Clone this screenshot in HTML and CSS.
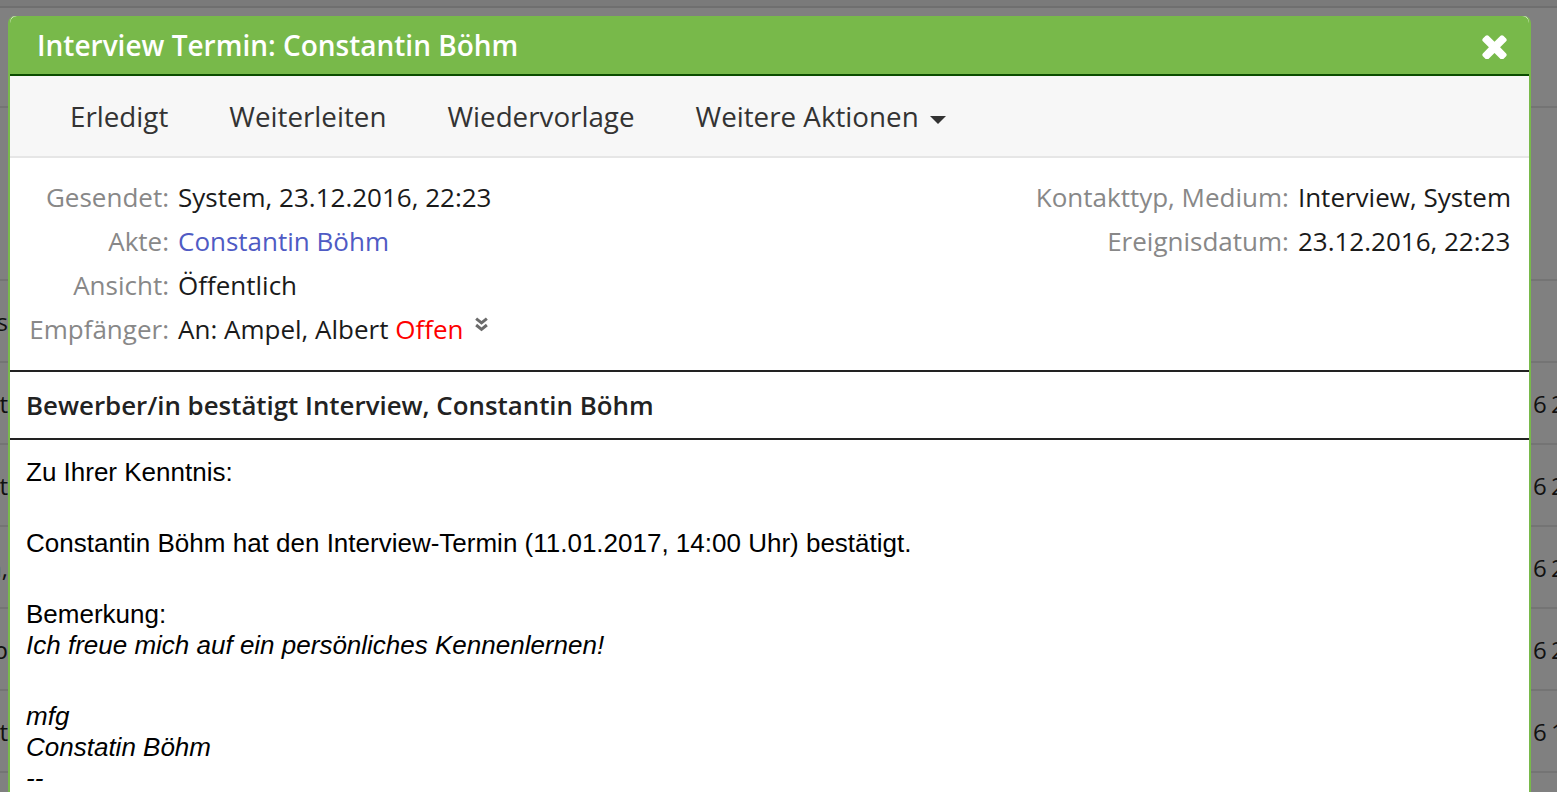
FILE: index.html
```html
<!doctype html>
<html>
<head>
<meta charset="utf-8">
<title>Interview Termin: Constantin Böhm</title>
<link rel="stylesheet" href="styles.css">
</head>
<body>
<div class="page">
	<div class="topband"></div>
	<div class="row r1"><div class="lcell"></div><div class="rcell"></div></div>
	<div class="row r2"><div class="lcell"></div><div class="rcell"></div></div>
	<div class="row"><div class="lcell">Bewerbungs</div><div class="rcell"></div></div>
	<div class="row"><div class="lcell">bestätigt</div><div class="rcell">6 2</div></div>
	<div class="row"><div class="lcell">bestätigt</div><div class="rcell">6 2</div></div>
	<div class="row"><div class="lcell">Böhm,</div><div class="rcell">6 2</div></div>
	<div class="row"><div class="lcell">Termp</div><div class="rcell">6 2</div></div>
	<div class="row"><div class="lcell">bestätigt</div><div class="rcell">6 1</div></div>
	<div class="row"><div class="lcell"></div><div class="rcell"></div></div>
</div>

<div class="modal">
	<div class="modal-head">
		<span class="modal-title">Interview Termin: Constantin Böhm</span>
		<span class="modal-close">
			<svg viewBox="110 310 1188 1216" width="25" height="25"><path fill="#fff" d="M1298 1322q0 40-28 68l-136 136q-28 28-68 28t-68-28l-294-294-294 294q-28 28-68 28t-68-28l-136-136q-28-28-28-68t28-68l294-294-294-294q-28-28-28-68t28-68l136-136q28-28 68-28t68 28l294 294 294-294q28-28 68-28t68 28l136 136q28 28 28 68t-28 68l-294 294 294 294q28 28 28 68z"/></svg>
		</span>
	</div>
	<ul class="toolbar">
		<li>Erledigt</li>
		<li>Weiterleiten</li>
		<li>Wiedervorlage</li>
		<li>Weitere Aktionen <span class="caret"></span></li>
	</ul>
	<div class="meta">
		<dl class="meta-left">
			<dt>Gesendet:</dt><dd>System, 23.12.2016, 22:23</dd>
			<dt>Akte:</dt><dd><a href="#">Constantin Böhm</a></dd>
			<dt>Ansicht:</dt><dd>Öffentlich</dd>
			<dt>Empfänger:</dt><dd>An: Ampel, Albert <span class="open">Offen</span>
				<svg class="more" viewBox="0 0 14 14" width="15" height="15"><path d="M2 1.5l5 4 5-4M2 7.5l5 4 5-4" fill="none" stroke="#6b6b6b" stroke-width="2.8"/></svg>
			</dd>
		</dl>
		<dl class="meta-right">
			<dt>Kontakttyp, Medium:</dt><dd>Interview, System</dd>
			<dt>Ereignisdatum:</dt><dd>23.12.2016, 22:23</dd>
		</dl>
	</div>
	<div class="subject">Bewerber/in bestätigt Interview, Constantin Böhm</div>
	<div class="message">
		<p>Zu Ihrer Kenntnis:</p>
		<p>Constantin Böhm hat den Interview-Termin (11.01.2017, 14:00 Uhr) bestätigt.</p>
		<p>Bemerkung:<br><i>Ich freue mich auf ein persönliches Kennenlernen!</i></p>
		<p><i>mfg<br>Constatin Böhm<br>--</i></p>
	</div>
</div>
</body>
</html>
```

FILE: styles.css
```css
* {margin:0; padding:0; list-style:none; box-sizing:border-box;}
html, body {height:100%; overflow:hidden;}
body {background:#808080; font-family:"Open Sans", sans-serif; color:#1a1a1a;}

.page {height:100%;}
.topband {height:8px; background:#7a7a7a; border-bottom:2px solid #6f6f6f;}
.row {display:flex; justify-content:space-between; align-items:center; height:82px; border-bottom:2px solid #747474; font-size:24px; color:#111;}
.row.r1 {height:100px;}
.row.r2 {height:173px;}
.lcell {width:8px; overflow:hidden; display:flex; justify-content:flex-end; white-space:nowrap;}
.rcell {width:26px; white-space:nowrap; word-spacing:-2px; padding-left:2px;}

.modal {position:absolute; left:8px; top:16px; width:1523px; height:800px; background:#fff; border:2px solid #78b94a; border-top:0; border-radius:7px 7px 0 0;}
.modal-head {height:60px; background:#78b94a; border-bottom:2px solid #0b4d00; border-radius:7px 7px 0 0; display:flex; align-items:center; justify-content:space-between; padding:0 22px 0 27px;}
.modal-title {color:#fff; font-size:28px; font-weight:600;}
.modal-close {display:flex; padding-top:2px;}

.toolbar {display:flex; height:82px; background:#f7f7f7; border-bottom:2px solid #e6e6e6; padding-left:29.5px; align-items:center; font-size:27.75px; color:#333;}
.toolbar li {padding:0 30.5px;}
.caret {display:inline-block; width:0; height:0; border-left:8px solid transparent; border-right:8px solid transparent; border-top:8px solid #333; vertical-align:middle; margin-left:4px;}

.meta {display:flex; justify-content:space-between; align-items:flex-start; padding:17px 18px 19px 0; border-bottom:2px solid #222; font-size:26px;}
.meta dl {display:grid; grid-template-columns:auto auto; column-gap:9px; line-height:44px;}
.meta-left {grid-template-columns:159px auto !important;}
.meta dt {color:#888; text-align:right;}
.meta dd {color:#1a1a1a;}
.meta a {color:#4f5bc4; text-decoration:none;}
.open {color:#f00;}
.more {vertical-align:top; margin:10px 0 0 4px;}

.subject {height:68px; border-bottom:2px solid #222; display:flex; align-items:center; padding-left:16px; font-size:25.85px; font-weight:600; color:#222;}

.message {padding:17px 16px; font-family:"Liberation Sans", Arial, sans-serif; font-size:26px; line-height:31px; color:#000;}
.message p {margin-bottom:40px;}
```
